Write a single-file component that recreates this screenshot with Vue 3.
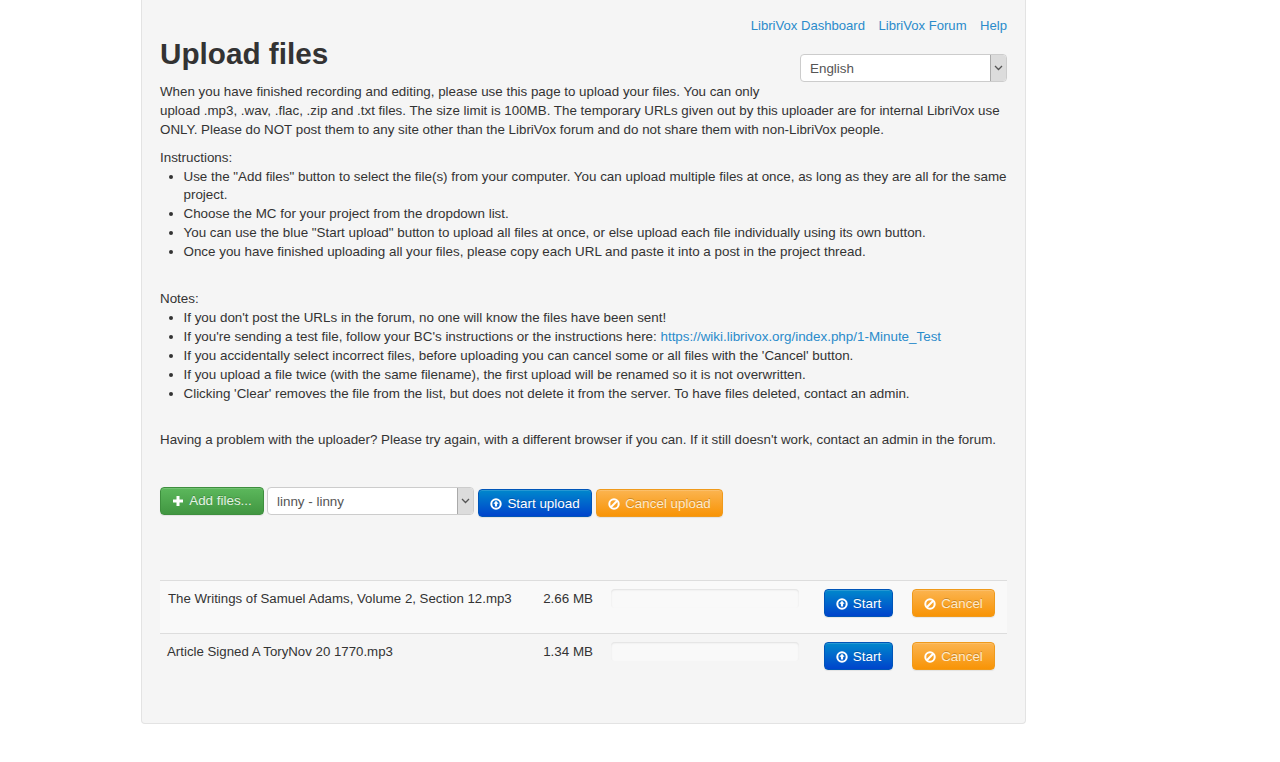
<script setup>
const instructions = [
  'Use the "Add files" button to select the file(s) from your computer. You can upload multiple files at once, as long as they are all for the same project.',
  'Choose the MC for your project from the dropdown list.',
  'You can use the blue "Start upload" button to upload all files at once, or else upload each file individually using its own button.',
  'Once you have finished uploading all your files, please copy each URL and paste it into a post in the project thread.'
]
const notesAfter = [
  "If you accidentally select incorrect files, before uploading you can cancel some or all files with the 'Cancel' button.",
  'If you upload a file twice (with the same filename), the first upload will be renamed so it is not overwritten.',
  "Clicking 'Clear' removes the file from the list, but does not delete it from the server. To have files deleted, contact an admin."
]
const files = [
  { name: 'The Writings of Samuel Adams, Volume 2, Section 12.mp3', size: '2.66 MB' },
  { name: 'Article Signed A ToryNov 20 1770.mp3', size: '1.34 MB' }
]
</script>

<template>
  <div class="page">
    <main class="well">
      <nav class="top-links">
        <a>LibriVox Dashboard</a>
        <a>LibriVox Forum</a>
        <a>Help</a>
      </nav>
      <div class="lang-wrap">
        <div class="select lang">
          <span class="select-value">English</span>
          <span class="select-arrow">
            <svg width="9" height="6" viewBox="0 0 9 6"><path d="M1 1l3.500 3.500L8 1" fill="none" stroke="#555" stroke-width="1.300" /></svg>
          </span>
        </div>
      </div>
      <h1>Upload files</h1>
      <p class="intro">When you have finished recording and editing, please use this page to upload your files. You can only upload .mp3, .wav, .flac, .zip and .txt files. The size limit is 100MB. The temporary URLs given out by this uploader are for internal LibriVox use ONLY. Please do NOT post them to any site other than the LibriVox forum and do not share them with non-LibriVox people.</p>

      <div class="label">Instructions:</div>
      <ul class="steps">
        <li v-for="t in instructions" :key="t">{{ t }}</li>
      </ul>

      <div class="label notes-label">Notes:</div>
      <ul class="notes">
        <li>If you don't post the URLs in the forum, no one will know the files have been sent!</li>
        <li>If you're sending a test file, follow your BC's instructions or the instructions here: <a>https://wiki.librivox.org/index.php/1-Minute_Test</a></li>
        <li v-for="t in notesAfter" :key="t">{{ t }}</li>
      </ul>

      <p class="problem">Having a problem with the uploader? Please try again, with a different browser if you can. If it still doesn't work, contact an admin in the forum.</p>

      <div class="toolbar">
        <button class="btn green">
          <svg width="12" height="12" viewBox="0 0 12 12"><path d="M4.500 1h3v3.500H11v3H7.500V11h-3V7.500H1v-3h3.500z" fill="#fff" /></svg>
          <span>Add files...</span>
        </button>
        <div class="select mc">
          <span class="select-value">linny - linny</span>
          <span class="select-arrow">
            <svg width="9" height="6" viewBox="0 0 9 6"><path d="M1 1l3.500 3.500L8 1" fill="none" stroke="#555" stroke-width="1.300" /></svg>
          </span>
        </div>
        <button class="btn blue low">
          <svg class="ico" width="12" height="12" viewBox="0 0 12 12"><circle cx="6" cy="6" r="4.700" fill="none" stroke="#fff" stroke-width="2" /><path d="M6 2.800L8.600 5.800H7.100V8.600H4.900V5.800H3.400z" fill="#fff" /></svg>
          <span>Start upload</span>
        </button>
        <button class="btn orange low">
          <svg class="ico" width="12" height="12" viewBox="0 0 12 12"><circle cx="6" cy="6" r="4.700" fill="none" stroke="#fff" stroke-width="2" /><path d="M2.800 9.200L9.200 2.800" stroke="#fff" stroke-width="2" /></svg>
          <span>Cancel upload</span>
        </button>
      </div>

      <div class="files">
        <div v-for="f in files" :key="f.name" class="file-row">
          <div class="file-name">{{ f.name }}</div>
          <div class="file-size">{{ f.size }}</div>
          <div class="progress"></div>
          <button class="btn blue small-start">
            <svg class="ico" width="12" height="12" viewBox="0 0 12 12"><circle cx="6" cy="6" r="4.700" fill="none" stroke="#fff" stroke-width="2" /><path d="M6 2.800L8.600 5.800H7.100V8.600H4.900V5.800H3.400z" fill="#fff" /></svg>
            <span>Start</span>
          </button>
          <button class="btn orange small-cancel">
            <svg class="ico" width="12" height="12" viewBox="0 0 12 12"><circle cx="6" cy="6" r="4.700" fill="none" stroke="#fff" stroke-width="2" /><path d="M2.800 9.200L9.200 2.800" stroke="#fff" stroke-width="2" /></svg>
            <span>Cancel</span>
          </button>
        </div>
      </div>
    </main>
  </div>
</template>

<style>
html, body { margin: 0; background: #fff; }
</style>

<style scoped>
.page {
  width: 885px;
  margin-left: 141px;
  font-family: "Liberation Sans", Arial, sans-serif;
  font-size: 13.4px;
  line-height: 18.9px;
  color: #333;
}
.well {
  box-sizing: border-box;
  height: 724px;
  margin: 0;
  padding: 17px 18px 0 18px;
  background: #f5f5f5;
  border: 1px solid #e3e3e3;
  border-top: 0;
  border-radius: 0 0 4px 4px;
}
a { color: #2a8bcb; text-decoration: none; }
.top-links {
  display: flex;
  justify-content: flex-end;
  gap: 13.500px;
  height: 19px;
  font-size: 13.100px;
}
.lang-wrap {
  float: right;
  margin-top: 18px;
  margin-bottom: 6px;
  margin-left: 30px;
}
h1 {
  margin: 0;
  padding-top: 2px;
  font-size: 29.700px;
  line-height: 32px;
  font-weight: 700;
}
.intro { margin: 13px 0 0; font-size: 13.350px; }
.label { margin-top: 9px; }
.notes-label { margin-top: 28px; }
ul {
  margin: 0;
  padding-left: 23.500px;
}
.steps { line-height: 18.800px; }
.notes { margin-top: -1px; line-height: 19px; }
.problem { margin: 28px 0 0; font-size: 13.350px; }
.select {
  box-sizing: border-box;
  display: flex;
  justify-content: space-between;
  height: 28px;
  background: #fff;
  border: 1px solid #ccc;
  border-radius: 4px;
  color: #555;
  overflow: hidden;
}
.lang { width: 207px; }
.mc { width: 207px; margin-left: -1px; }
.select-value { padding-left: 9px; line-height: 27px; }
.select-arrow {
  width: 15px;
  background: #dcdcdc;
  border-left: 1px solid #aaa;
  display: flex;
  align-items: center;
  justify-content: center;
}
.toolbar {
  display: flex;
  align-items: flex-start;
  gap: 4px;
  margin-top: 38px;
}
.btn {
  box-sizing: border-box;
  display: inline-flex;
  align-items: center;
  justify-content: center;
  gap: 5px;
  height: 28px;
  padding: 0;
  border-radius: 4px;
  font: inherit;
  white-space: nowrap;
  color: #fff;
  text-shadow: 0 -1px 0 rgba(0, 0, 0, .2);
  box-shadow: inset 0 1px 0 rgba(255, 255, 255, .15), 0 1px 1px rgba(0, 0, 0, .075);
}
.ico { flex: none; }
.low { margin-top: 2px; }
.low, .small-start, .small-cancel { padding-top: 2px; }
.green {
  width: 104px;
  background: linear-gradient(#5cb85c, #419641);
  border: 1px solid #3e8f3e;
}
.green span { color: #e4f2e4; }
.blue {
  width: 114px;
  background: linear-gradient(#08c, #04c);
  border: 1px solid #0055b8;
}
.orange {
  width: 127px;
  background: linear-gradient(#fbb450, #f89406);
  border: 1px solid #ef9a1c;
}
.orange span { color: #fdeacc; }
.files {
  margin-top: 63px;
  border-top: 1px solid #ddd;
}
.file-row {
  display: flex;
  align-items: flex-start;
  height: 52px;
  padding: 8px 12px 0 8px;
  box-sizing: border-box;
}
.file-row:first-child { background: #f9f9f9; height: 53px; border-bottom: 1px solid #ddd; }
.file-row:nth-child(2) .file-name { margin-left: -1px; margin-right: 1px; }
.file-name { width: 364px; padding-top: 1px; font-size: 13.250px; }
.file-size { width: 61px; padding-top: 1px; text-align: right; }
.progress {
  width: 188px;
  height: 19px;
  margin-left: 18px;
  background: #f9f9f9;
  border-radius: 4px;
  box-shadow: inset 0 1px 2px rgba(0, 0, 0, .1);
}
.small-start { width: 69px; margin-left: 25px; }
.small-cancel { width: 83px; margin-left: 19px; }
</style>
